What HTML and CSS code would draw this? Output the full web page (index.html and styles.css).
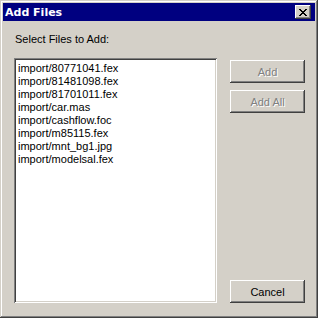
FILE: index.html
```html
<!DOCTYPE html>
<html>
<head>
<meta charset="utf-8">
<link rel="stylesheet" href="styles.css">
</head>
<body>
<div class="window">
  <div class="titlebar">
    <span class="title">Add Files</span>
    <button class="close" aria-label="Close">
      <svg width="8" height="7" viewBox="0 0 8 7" shape-rendering="crispEdges">
        <path d="M0 0h2v1h-2z M6 0h2v1h-2z M1 1h2v1h-2z M5 1h2v1h-2z M2 2h4v1h-4z M3 3h2v1h-2z M2 4h4v1h-4z M1 5h2v1h-2z M5 5h2v1h-2z M0 6h2v1h-2z M6 6h2v1h-2z" fill="#000"/>
      </svg>
    </button>
  </div>
  <div class="content">
    <div class="label">Select Files to Add:</div>
    <div class="main">
      <div class="listbox">
        <div class="item">import/80771041.fex</div>
        <div class="item">import/81481098.fex</div>
        <div class="item">import/81701011.fex</div>
        <div class="item">import/car.mas</div>
        <div class="item">import/cashflow.foc</div>
        <div class="item">import/m85115.fex</div>
        <div class="item">import/mnt_bg1.jpg</div>
        <div class="item">import/modelsal.fex</div>
      </div>
      <div class="buttons">
        <button class="btn disabled">Add</button>
        <button class="btn disabled">Add All</button>
        <div class="spacer"></div>
        <button class="btn">Cancel</button>
      </div>
    </div>
  </div>
</div>
</body>
</html>
```
FILE: styles.css
```css
html, body {
  margin: 0;
  padding: 0;
  background: #d4d0c8;
}
body {
  font-family: "Liberation Sans", Arial, sans-serif;
  font-size: 11px;
}
.window {
  width: 318px;
  height: 318px;
  box-sizing: border-box;
  padding: 3px;
  background: #d4d0c8;
  box-shadow: inset -1px -1px #404040, inset 1px 1px #d4d0c8, inset -2px -2px #808080, inset 2px 2px #ffffff;
  display: flex;
  flex-direction: column;
}
.titlebar {
  height: 18px;
  background: #000080;
  display: flex;
  align-items: center;
  justify-content: space-between;
  padding: 0 4px 0 2px;
  flex: none;
}
.title {
  color: #fff;
  font-weight: bold;
  font-size: 11px;
  font-family: "DejaVu Sans", sans-serif;
  font-size: 11px;
  letter-spacing: 0;
}
.close {
  width: 16px;
  height: 14px;
  padding: 0;
  border: 0;
  background: #d4d0c8;
  box-shadow: inset -1px -1px #404040, inset 1px 1px #ffffff, inset -2px -2px #808080, inset 2px 2px #d4d0c8;
  display: flex;
  align-items: center;
  justify-content: center;
  padding-right: 1px;
}
.close svg { display: block; }
.content {
  flex: 1;
  display: flex;
  flex-direction: column;
  padding: 12px 10px 12px 11px;
  min-height: 0;
}
.label {
  line-height: 13px;
  padding-left: 1px;
  color: #000;
  height: 13px;
}
.main {
  flex: 1;
  display: flex;
  margin-top: 12px;
  gap: 13px;
  min-height: 0;
}
.listbox {
  width: 203px;
  box-sizing: border-box;
  background: #fff;
  box-shadow: inset 1px 1px #808080, inset -1px -1px #ffffff, inset 2px 2px #404040, inset -2px -2px #d4d0c8;
  padding: 4px 4px;
}
.item {
  line-height: 13px;
  height: 13px;
  color: #000;
  white-space: nowrap;
}
.buttons {
  display: flex;
  flex-direction: column;
  width: 75px;
  padding-top: 2px;
  gap: 7px;
}
.spacer { flex: 1; }
.btn {
  width: 75px;
  height: 23px;
  border: 0;
  padding: 0;
  background: #d4d0c8;
  font-family: "Liberation Sans", Arial, sans-serif;
  font-size: 11px;
  color: #000;
  box-shadow: inset -1px -1px #404040, inset 1px 1px #ffffff, inset -2px -2px #808080, inset 2px 2px #d4d0c8;
  flex: none;
}
.btn.disabled {
  color: #808080;
  text-shadow: 1px 1px 0 #ffffff;
}
```
